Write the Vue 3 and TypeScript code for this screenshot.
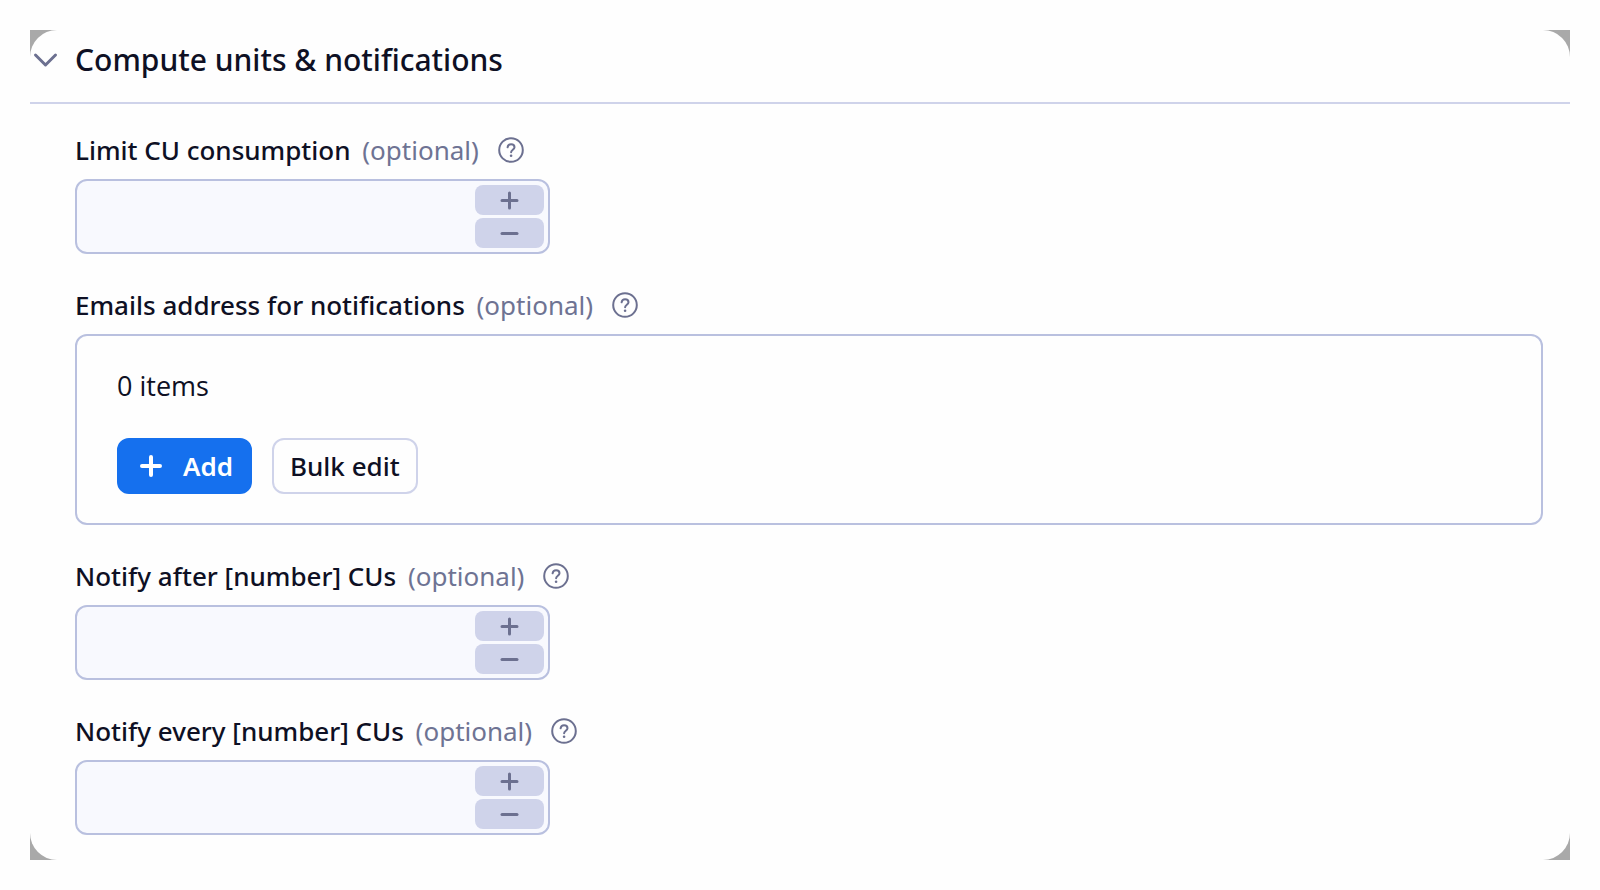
<script setup lang="ts">
import { computed, ref } from 'vue'

interface Field {
  id: string
  kind: 'number' | 'list'
  label: string
  value: number | null
}

const open = ref(true)
const emails = ref<string[]>([])
const fields = ref<Field[]>([
  { id: 'limit-cu', kind: 'number', label: 'Limit CU consumption', value: null },
  { id: 'emails', kind: 'list', label: 'Emails address for notifications', value: null },
  { id: 'notify-after', kind: 'number', label: 'Notify after [number] CUs', value: null },
  { id: 'notify-every', kind: 'number', label: 'Notify every [number] CUs', value: null },
])

const countText = computed(() => `${emails.value.length} items`)

function step(field: Field, amount: number) {
  field.value = Math.max(0, (Number(field.value) || 0) + amount)
}
</script>

<template>
  <main class="page">
    <div class="frame">
      <section class="panel">
        <h2 class="heading">
          <button class="toggle" type="button" :aria-expanded="open" @click="open = !open">
            <svg class="chevron" viewBox="0 0 30 30" aria-hidden="true">
              <path d="M5.500 10 15.500 20 25.500 10" />
            </svg>
            <span>Compute units &amp; notifications</span>
          </button>
        </h2>

        <div v-show="open" class="fields">
          <div v-for="field in fields" :key="field.id" class="field">
            <div class="label-row">
              <label :for="field.id">{{ field.label }} <span class="optional">(optional)</span></label>
              <button class="help" type="button" aria-label="Help">
                <svg viewBox="0 0 26 26" aria-hidden="true">
                  <circle cx="13" cy="13" r="11.800" />
                  <path d="M9.600 10.300c.3-2 1.600-3.100 3.500-3.100 2 0 3.400 1.200 3.400 3 0 2.400-3.400 2.700-3.400 5.100" />
                  <circle class="dot" cx="13.100" cy="18.700" r="1.300" />
                </svg>
              </button>
            </div>

            <div v-if="field.kind === 'number'" class="number">
              <input :id="field.id" v-model="field.value" type="number" min="0" />
              <div class="steps">
                <button type="button" aria-label="Increase" @click="step(field, 1)">
                  <svg viewBox="0 0 19 19" aria-hidden="true"><path d="M2 9.500H17M9.500 2V17" /></svg>
                </button>
                <button type="button" aria-label="Decrease" @click="step(field, -1)">
                  <svg viewBox="0 0 19 19" aria-hidden="true"><path d="M2 9.500H17" /></svg>
                </button>
              </div>
            </div>

            <div v-else class="list">
              <p class="count">{{ countText }}</p>
              <div class="actions">
                <button :id="field.id" class="btn primary" type="button" @click="emails.push('')">
                  <svg viewBox="0 0 24 24" aria-hidden="true"><path d="M3 12H21M12 3V21" /></svg>
                  <span>Add</span>
                </button>
                <button class="btn" type="button">Bulk edit</button>
              </div>
            </div>
          </div>
        </div>
      </section>
    </div>
  </main>
</template>

<style>
body {
  background: #fefefe;
}
</style>

<style scoped>
.page {
  padding: 30px;
  color: #0e1024;
  font-family: 'Open Sans', 'Noto Sans', sans-serif;
  font-size: 27px;
  line-height: 36px;
}

.frame {
  background: #a9a9a9;
}

.panel {
  padding-bottom: 25px;
  border-radius: 27px;
  background: #fefefe;
}

button,
input {
  box-sizing: border-box;
  margin: 0;
  padding: 0;
  border: 0;
  background: none;
  color: inherit;
  font: inherit;
}

button {
  cursor: pointer;
}

svg {
  display: block;
  fill: none;
  stroke: currentColor;
  stroke-linecap: round;
  stroke-linejoin: round;
}

.heading {
  margin: 0;
  border-bottom: 2px solid #cfd3ea;
  font-family: 'Noto Sans', sans-serif;
  font-size: 30px;
  font-weight: 500;
  line-height: 40px;
}

.toggle {
  display: flex;
  align-items: center;
  gap: 15px;
  width: 100%;
  padding: 10px 0 22px;
  text-align: left;
}

.chevron {
  width: 30px;
  height: 30px;
  color: #6c7090;
  stroke-width: 3;
}

.fields {
  display: grid;
  gap: 34px;
  padding: 28px 27px 0 45px;
}

.label-row {
  display: flex;
  align-items: center;
  gap: 19px;
  margin-bottom: 11px;
  font-family: 'Noto Sans', sans-serif;
  font-size: 26px;
  font-weight: 500;
}

.field + .field {
  margin-top: -1px;
}

.optional {
  margin-left: 5px;
  color: #6e7393;
  font-weight: 400;
}

.help {
  width: 26px;
  height: 26px;
  color: #6c7090;
}

.help svg {
  stroke-width: 2;
}

.dot {
  fill: currentColor;
  stroke: none;
}

.number {
  box-sizing: border-box;
  display: flex;
  max-width: 475px;
  height: 75px;
  padding: 4px;
  border: 2px solid #b9c0df;
  border-radius: 12px;
  background: #f8f9fe;
}

.number input {
  flex: 1;
  min-width: 0;
  padding: 0 16px;
  outline: none;
  appearance: textfield;
}

.steps {
  display: grid;
  grid-template-rows: 1fr 1fr;
  gap: 3px;
  width: 69px;
}

.steps button {
  display: grid;
  place-items: center;
  border-radius: 8px;
  background: #cfd3ea;
  color: #6c7090;
}

.steps svg {
  width: 19px;
  height: 19px;
  stroke-width: 3;
}

.list {
  padding: 32px 40px 29px;
  border: 2px solid #b9c0df;
  border-radius: 12px;
}

.count {
  margin: 0 0 34px;
}

.actions {
  display: flex;
  gap: 20px;
}

.btn {
  display: flex;
  align-items: center;
  gap: 20px;
  height: 56px;
  padding: 0 16px;
  border: 2px solid #cfd3ea;
  border-radius: 12px;
  font-family: 'Noto Sans', sans-serif;
  font-size: 26px;
  font-weight: 500;
}

.primary {
  padding: 0 17px 0 20px;
  border-color: #1570ee;
  background: #1570ee;
  color: #fff;
  font-weight: 600;
}

.btn svg {
  width: 24px;
  height: 24px;
  stroke-width: 4;
}
</style>
